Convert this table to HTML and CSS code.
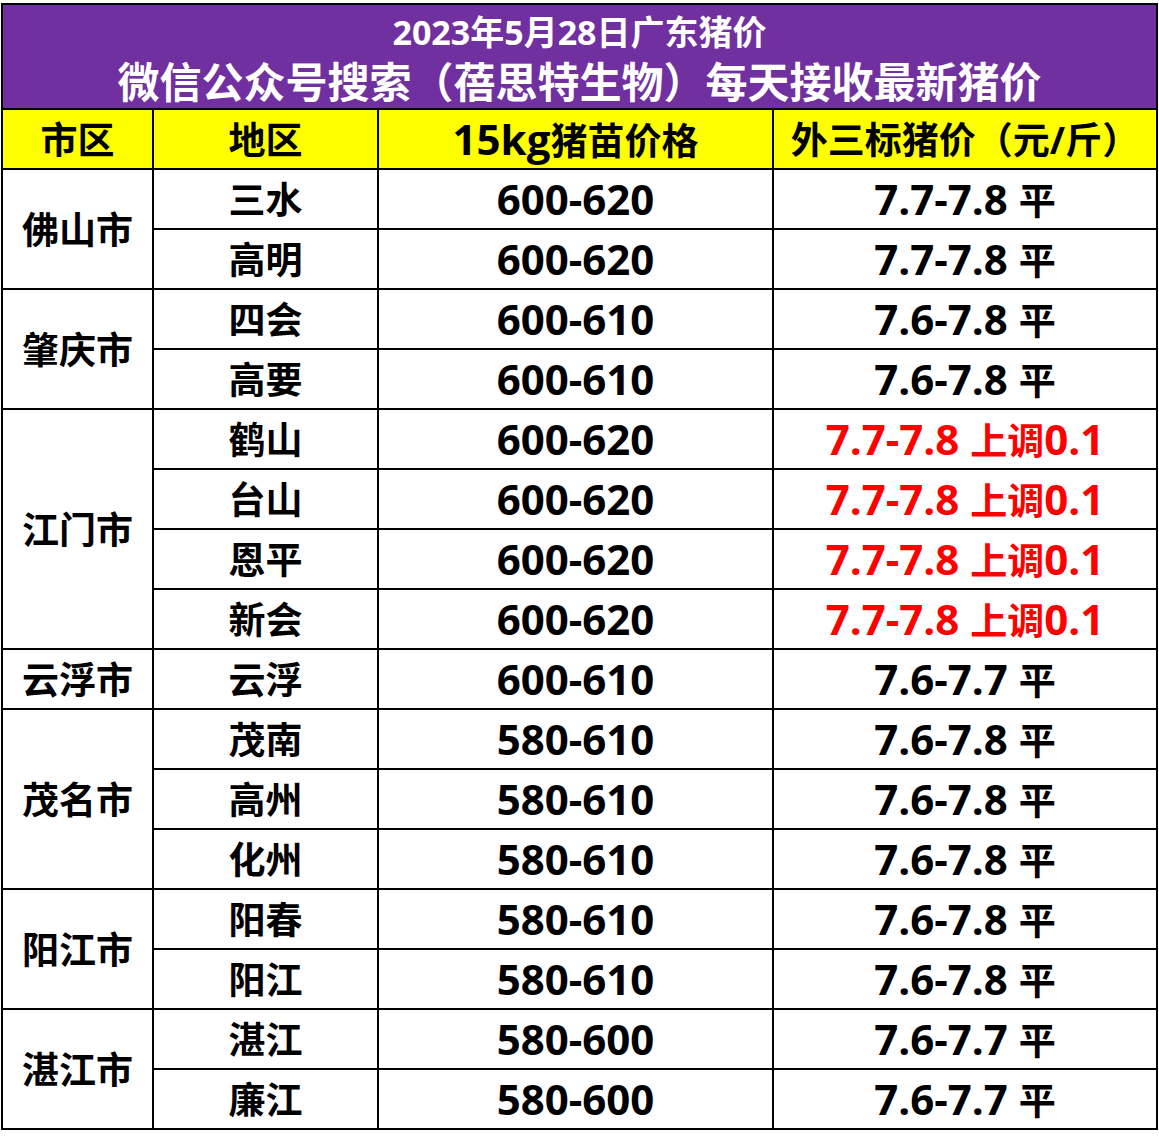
FILE: index.html
```html
<!DOCTYPE html>
<html lang="zh-CN">
<head>
<meta charset="utf-8">
<title>2023年5月28日广东猪价</title>
<link rel="stylesheet" href="styles.css">
</head>
<body>
<div class="page">
<table class="price-table">
  <colgroup>
    <col class="c-city">
    <col class="c-area">
    <col class="c-piglet">
    <col class="c-price">
  </colgroup>
  <thead>
    <tr class="title-row">
      <th colspan="4" class="title">
        <div class="t1">2023年5月28日广东猪价</div>
        <div class="t2">微信公众号搜索（蓓思特生物）每天接收最新猪价</div>
      </th>
    </tr>
    <tr class="head-row">
      <th>市区</th>
      <th>地区</th>
      <th><span class="num">15kg</span>猪苗价格</th>
      <th>外三标猪价（元/斤）</th>
    </tr>
  </thead>
  <tbody>
    <tr><td rowspan="2" class="city">佛山市</td><td>三水</td><td><span class="num">600-620</span></td><td><span class="num">7.7-7.8 </span>平</td></tr>
    <tr><td>高明</td><td><span class="num">600-620</span></td><td><span class="num">7.7-7.8 </span>平</td></tr>
    <tr><td rowspan="2" class="city">肇庆市</td><td>四会</td><td><span class="num">600-610</span></td><td><span class="num">7.6-7.8 </span>平</td></tr>
    <tr><td>高要</td><td><span class="num">600-610</span></td><td><span class="num">7.6-7.8 </span>平</td></tr>
    <tr><td rowspan="4" class="city">江门市</td><td>鹤山</td><td><span class="num">600-620</span></td><td class="up"><span class="num">7.7-7.8 </span>上调<span class="num">0.1</span></td></tr>
    <tr><td>台山</td><td><span class="num">600-620</span></td><td class="up"><span class="num">7.7-7.8 </span>上调<span class="num">0.1</span></td></tr>
    <tr><td>恩平</td><td><span class="num">600-620</span></td><td class="up"><span class="num">7.7-7.8 </span>上调<span class="num">0.1</span></td></tr>
    <tr><td>新会</td><td><span class="num">600-620</span></td><td class="up"><span class="num">7.7-7.8 </span>上调<span class="num">0.1</span></td></tr>
    <tr><td class="city">云浮市</td><td>云浮</td><td><span class="num">600-610</span></td><td><span class="num">7.6-7.7 </span>平</td></tr>
    <tr><td rowspan="3" class="city">茂名市</td><td>茂南</td><td><span class="num">580-610</span></td><td><span class="num">7.6-7.8 </span>平</td></tr>
    <tr><td>高州</td><td><span class="num">580-610</span></td><td><span class="num">7.6-7.8 </span>平</td></tr>
    <tr><td>化州</td><td><span class="num">580-610</span></td><td><span class="num">7.6-7.8 </span>平</td></tr>
    <tr><td rowspan="2" class="city">阳江市</td><td>阳春</td><td><span class="num">580-610</span></td><td><span class="num">7.6-7.8 </span>平</td></tr>
    <tr><td>阳江</td><td><span class="num">580-610</span></td><td><span class="num">7.6-7.8 </span>平</td></tr>
    <tr><td rowspan="2" class="city">湛江市</td><td>湛江</td><td><span class="num">580-600</span></td><td><span class="num">7.6-7.7 </span>平</td></tr>
    <tr><td>廉江</td><td><span class="num">580-600</span></td><td><span class="num">7.6-7.7 </span>平</td></tr>
  </tbody>
</table>
</div>
</body>
</html>
```
FILE: styles.css
```css
html, body {
  margin: 0;
  padding: 0;
  background: #ffffff;
}

.page {
  padding: 3px 0 0 1px;
}

.price-table {
  border-collapse: collapse;
  table-layout: fixed;
  width: 1155px;
  border: 2px solid #000;
  font-family: "Open Sans", "Noto Sans CJK SC", sans-serif;
  font-weight: 700;
  color: #000;
}

.c-city { width: 151px; }
.c-area { width: 225px; }
.c-piglet { width: 395px; }
.c-price { width: 384px; }

.price-table th,
.price-table td {
  border: 2px solid #000;
  padding: 0;
  text-align: center;
  vertical-align: middle;
  font-size: 37px;
  line-height: 1;
  font-weight: 700;
  white-space: nowrap;
}

.title-row {
  height: 104px;
}

.price-table th.title {
  background: #7030a0;
  color: #ffffff;
  vertical-align: top;
  padding-top: 4px;
}

.t1 {
  font-size: 34px;
  line-height: 47px;
}

.t2 {
  font-size: 42px;
  line-height: 52px;
}

.head-row {
  height: 60px;
}

.head-row th {
  background: #ffff00;
}

.price-table tbody tr {
  height: 60px;
}

.num {
  font-size: 42px;
}

.price-table td.up {
  color: #ff0000;
}
```
